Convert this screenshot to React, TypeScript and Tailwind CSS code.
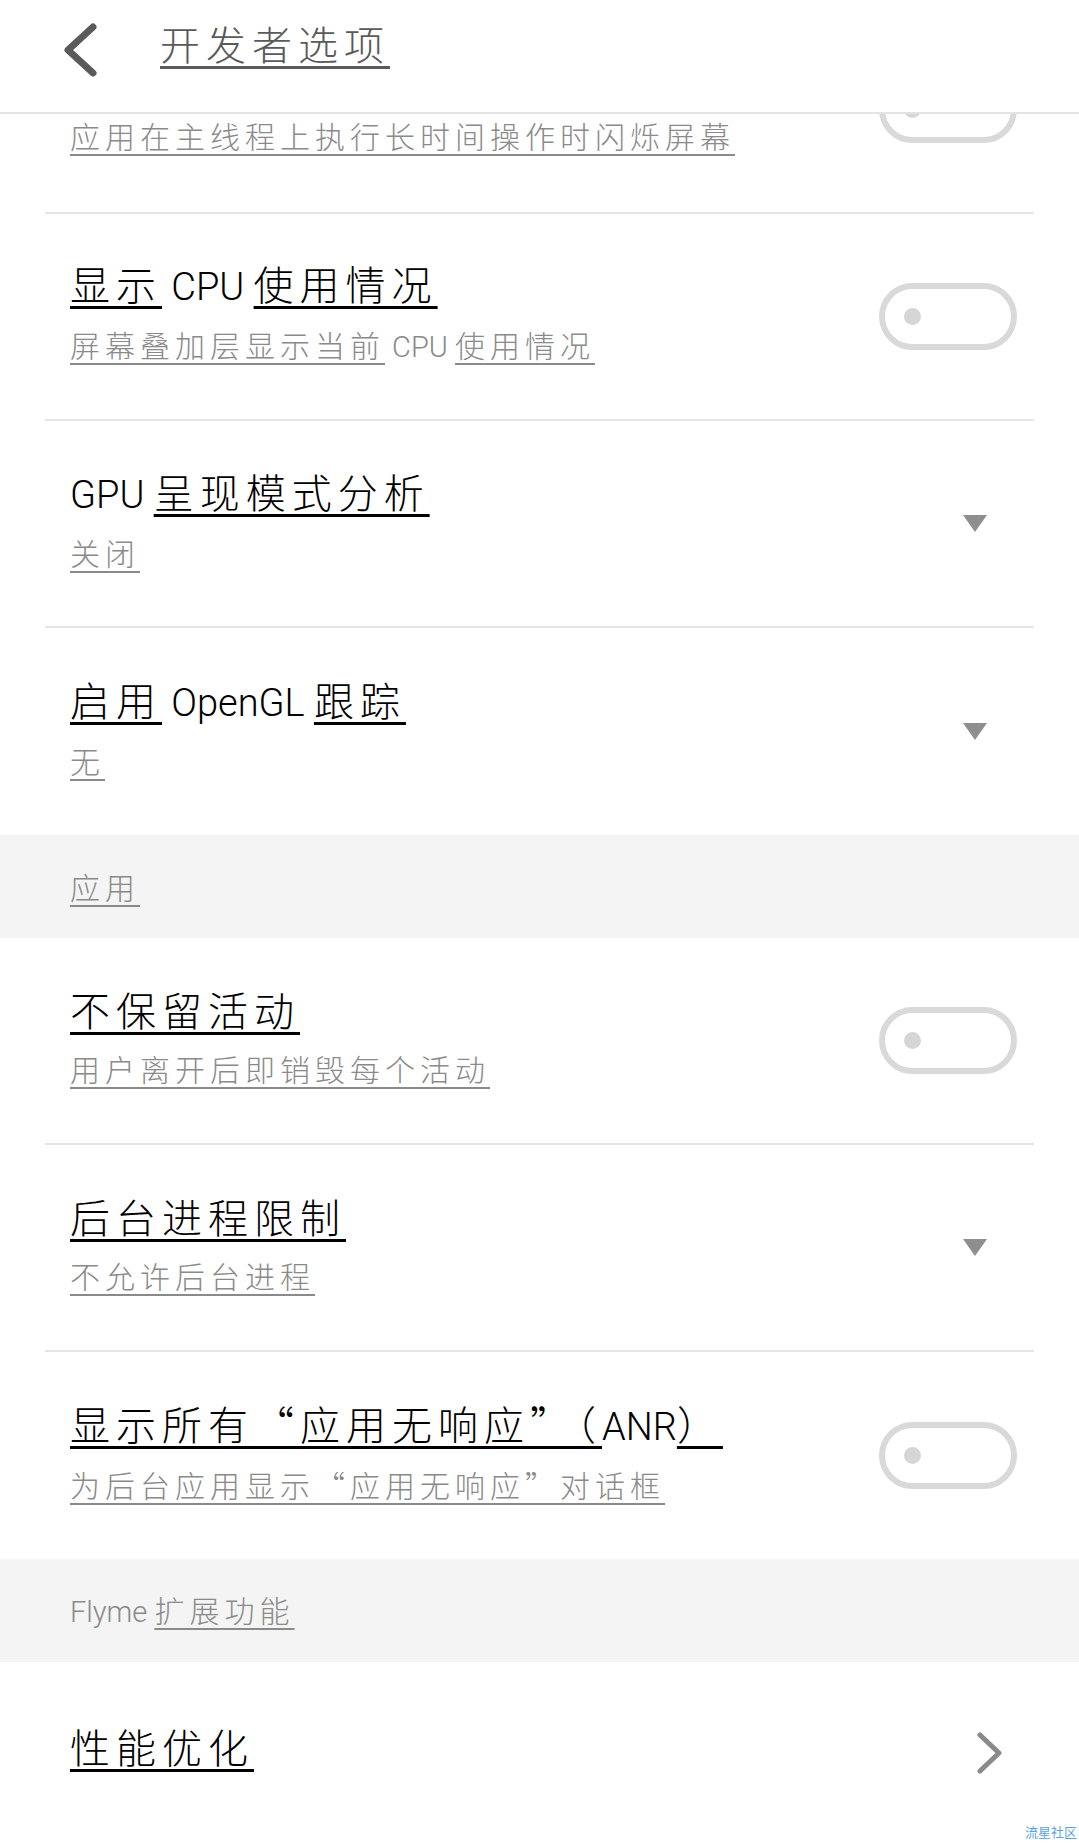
import React from "react";

type Part = [string, boolean];

const CJK = "font-['Noto_Sans_CJK_SC',sans-serif]";
const LAT = "font-['Roboto','Noto_Sans_CJK_SC',sans-serif]";

function Title({ parts }: { parts: Part[] }) {
  return (
    <div className="whitespace-nowrap text-[40px] leading-[50px] text-black">
      {parts.map(([t, c], i) =>
        c ? (
          <span
            key={i}
            className={`${CJK} font-light tracking-[6px] underline decoration-[3px] underline-offset-[6px]`}
          >
            {t}
          </span>
        ) : (
          <span key={i} className={`${LAT} font-light text-[38px]`}>
            {t}
          </span>
        )
      )}
    </div>
  );
}

function Sub({ parts }: { parts: Part[] }) {
  return (
    <div className="whitespace-nowrap text-[30px] leading-[40px] text-[#8a8a8a]">
      {parts.map(([t, c], i) =>
        c ? (
          <span
            key={i}
            className={`${CJK} font-light tracking-[5px] underline decoration-2 underline-offset-[6px]`}
          >
            {t}
          </span>
        ) : (
          <span key={i} className={`${LAT} font-light text-[29px]`}>
            {t}
          </span>
        )
      )}
    </div>
  );
}

function Toggle({ cls = "" }: { cls?: string }) {
  return (
    <div
      className={`mr-[17px] flex h-[67px] w-[138px] shrink-0 items-center rounded-full border-[6px] border-[#d9d9d9] ${cls}`}
    >
      <div className="ml-[19px] h-[17px] w-[17px] rounded-full bg-[#d6d6d6]" />
    </div>
  );
}

function Tri() {
  return (
    <svg className="mr-[47px]" width="24" height="17" viewBox="0 0 24 17">
      <polygon points="0,0 24,0 12,17" fill="#8e8e8e" />
    </svg>
  );
}

function Chevron() {
  return (
    <svg className="mr-[30px]" width="28" height="42" viewBox="0 0 28 42">
      <polyline
        points="4,3 23,21 4,39"
        fill="none"
        stroke="#8a8a8a"
        strokeWidth="5"
        strokeLinecap="round"
        strokeLinejoin="round"
      />
    </svg>
  );
}

function Row({
  title,
  sub,
  right,
  divider = true,
  h = "h-[207px]",
  shift = "-mt-[8px]",
}: {
  title: Part[];
  sub?: Part[];
  right: "toggle" | "tri" | "chev";
  divider?: boolean;
  h?: string;
  shift?: string;
}) {
  return (
    <div
      className={`mx-[45px] flex shrink-0 items-center pl-[25px] ${h} ${
        divider ? "border-b-2 border-[#e6e6e6]" : ""
      }`}
    >
      <div className={`flex flex-1 flex-col ${shift}`}>
        <Title parts={title} />
        {sub && (
          <div className="mt-[12px]">
            <Sub parts={sub} />
          </div>
        )}
      </div>
      {right === "toggle" && <Toggle />}
      {right === "tri" && <Tri />}
      {right === "chev" && <Chevron />}
    </div>
  );
}

function Section({ parts }: { parts: Part[] }) {
  return (
    <div className="flex h-[103px] shrink-0 items-center bg-[#f4f4f4] pl-[70px]">
      <Sub parts={parts} />
    </div>
  );
}

export default function App() {
  return (
    <div className="relative flex h-[1843px] w-[1079px] flex-col overflow-hidden bg-white">
      {/* Header */}
      <div className="relative z-10 flex h-[114px] shrink-0 items-start border-b-2 border-[#e3e3e3] bg-white">
        <svg className="ml-[62px] mt-[22px]" width="38" height="56" viewBox="0 0 38 56">
          <polyline
            points="31,5 6,28 31,51"
            fill="none"
            stroke="#5a5a5a"
            strokeWidth="7"
            strokeLinecap="round"
            strokeLinejoin="round"
          />
        </svg>
        <div
          className={`${CJK} ml-[60px] mt-[18px] whitespace-nowrap text-[40px] font-light leading-[50px] tracking-[6px] text-[#5a5a5a] underline decoration-[3px] underline-offset-[6px]`}
        >
          开发者选项
        </div>
      </div>

      {/* Partially scrolled row (its top is hidden under the header) */}
      <div className="mx-[45px] flex h-[100px] shrink-0 items-start border-b-2 border-[#e6e6e6] pl-[25px]">
        <div className="flex-1 pt-[1px]">
          <Sub parts={[["应用在主线程上执行长时间操作时闪烁屏幕", true]]} />
        </div>
        <Toggle cls="-mt-[38px]" />
      </div>

      <Row
        title={[
          ["显示", true],
          [" CPU ", false],
          ["使用情况", true],
        ]}
        sub={[
          ["屏幕叠加层显示当前", true],
          [" CPU ", false],
          ["使用情况", true],
        ]}
        right="toggle"
      />
      <Row
        title={[
          ["GPU ", false],
          ["呈现模式分析", true],
        ]}
        sub={[["关闭", true]]}
        right="tri"
      />
      <Row
        title={[
          ["启用", true],
          [" OpenGL ", false],
          ["跟踪", true],
        ]}
        sub={[["无", true]]}
        right="tri"
        divider={false}
      />

      <Section parts={[["应用", true]]} />

      <Row
        title={[["不保留活动", true]]}
        sub={[["用户离开后即销毁每个活动", true]]}
        right="toggle"
      />
      <Row
        title={[["后台进程限制", true]]}
        sub={[["不允许后台进程", true]]}
        right="tri"
      />
      <Row
        title={[
          ["显示所有“应用无响应”（", true],
          ["ANR", false],
          ["）", true],
        ]}
        sub={[["为后台应用显示“应用无响应”对话框", true]]}
        right="toggle"
        divider={false}
      />

      <Section
        parts={[
          ["Flyme ", false],
          ["扩展功能", true],
        ]}
      />

      <Row
        title={[["性能优化", true]]}
        right="chev"
        divider={false}
        h="h-[182px]"
        shift="-mt-[12px]"
      />

      <div
        className={`${CJK} absolute bottom-[3px] right-[2px] text-[13px] leading-[16px] text-[#5aa3e0]`}
      >
        流星社区
      </div>
    </div>
  );
}
